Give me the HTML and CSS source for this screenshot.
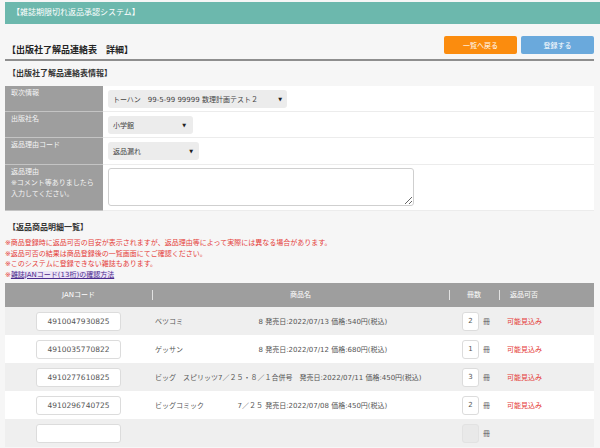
FILE: index.html
```html
<!DOCTYPE html>
<html lang="ja">
<head>
<meta charset="utf-8">
<title>出版社了解品連絡表 詳細</title>
<link rel="stylesheet" href="styles.css">
</head>
<body>
<div class="app-header">【雑誌期限切れ返品承認システム】</div>

<div class="title-row">
  <h1 class="page-title">【出版社了解品連絡表　詳細】</h1>
  <div class="actions">
    <button class="btn btn-back">一覧へ戻る</button>
    <button class="btn btn-save">登録する</button>
  </div>
</div>

<h2 class="section-title">【出版社了解品連絡表情報】</h2>
<div class="info">
  <div class="info-row r1">
    <div class="info-label">取次情報</div>
    <div class="info-value"><div class="sel sel-1"><span>トーハン　99-5-99 99999 数理計画テスト２</span><span class="arrow">▼</span></div></div>
  </div>
  <div class="info-row r2">
    <div class="info-label">出版社名</div>
    <div class="info-value"><div class="sel sel-2"><span>小学館</span><span class="arrow">▼</span></div></div>
  </div>
  <div class="info-row r3">
    <div class="info-label">返品理由コード</div>
    <div class="info-value"><div class="sel sel-3"><span>返品漏れ</span><span class="arrow">▼</span></div></div>
  </div>
  <div class="info-row r4">
    <div class="info-label">返品理由<br>※コメント等ありましたら<br>入力してください。</div>
    <div class="info-value top"><textarea class="memo"></textarea></div>
  </div>
</div>

<h2 class="section-title s2">【返品商品明細一覧】</h2>
<div class="notes">
  <p>※商品登録時に返品可否の目安が表示されますが、返品理由等によって実際には異なる場合があります。</p>
  <p>※返品可否の結果は商品登録後の一覧画面にてご確認ください。</p>
  <p>※このシステムに登録できない雑誌もあります。</p>
  <p>※<a class="jan-link" href="#">雑誌JANコード(13桁)の確認方法</a></p>
</div>

<div class="items">
  <div class="items-head">
    <div class="th c-jan">JANコード</div>
    <div class="th c-name">商品名</div>
    <div class="th c-qty">冊数</div>
    <div class="th c-ok">返品可否</div>
  </div>
  <div class="item odd">
    <div class="c-jan"><div class="jan">4910047930825</div></div>
    <div class="c-name"><span class="head"><span>ベツコミ</span><span>8</span></span> 発売日:2022/07/13 価格:540円(税込)</div>
    <div class="c-qty"><span class="qty">2</span><span>冊</span></div>
    <div class="c-ok ok">可能見込み</div>
  </div>
  <div class="item">
    <div class="c-jan"><div class="jan">4910035770822</div></div>
    <div class="c-name"><span class="head"><span>ゲッサン</span><span>8</span></span> 発売日:2022/07/12 価格:680円(税込)</div>
    <div class="c-qty"><span class="qty">1</span><span>冊</span></div>
    <div class="c-ok ok">可能見込み</div>
  </div>
  <div class="item odd">
    <div class="c-jan"><div class="jan">4910277610825</div></div>
    <div class="c-name">ビッグ　スピリッツ7／２５・８／１合併号　発売日:2022/07/11 価格:450円(税込)</div>
    <div class="c-qty"><span class="qty">3</span><span>冊</span></div>
    <div class="c-ok ok">可能見込み</div>
  </div>
  <div class="item">
    <div class="c-jan"><div class="jan">4910296740725</div></div>
    <div class="c-name"><span class="head"><span>ビッグコミック</span><span>7／２５</span></span> 発売日:2022/07/08 価格:450円(税込)</div>
    <div class="c-qty"><span class="qty">2</span><span>冊</span></div>
    <div class="c-ok ok">可能見込み</div>
  </div>
  <div class="item odd">
    <div class="c-jan"><div class="jan"></div></div>
    <div class="c-name"></div>
    <div class="c-qty"><span class="qty empty"></span><span>冊</span></div>
    <div class="c-ok ok"></div>
  </div>
</div>
</body>
</html>
```

FILE: styles.css
```css
* { box-sizing: border-box; }

body {
  margin: 0;
  background: #f6f6f6;
  font-family: "DejaVu Sans", "Noto Sans CJK JP", sans-serif;
  font-size: 7px;
  color: #555;
  overflow: hidden;
}

.app-header {
  margin: 2px 0 0 5px;
  height: 22px;
  line-height: 22px;
  padding-left: 7px;
  background: #6cb8ad;
  color: #fff;
  font-size: 8px;
}

.title-row {
  margin: 0 6px 0 5px;
  padding: 12px 0 5px 2px;
  display: flex;
  justify-content: space-between;
  border-bottom: 2px solid #8e8e8e;
}

.page-title {
  margin: 0 0 -2px;
  align-self: flex-end;
  font-size: 9px;
  line-height: 12px;
  font-weight: bold;
  color: #222;
}

.actions { display: flex; gap: 4px; }

.btn {
  width: 73px;
  height: 18px;
  border: none;
  border-radius: 2px;
  color: #fff;
  font-family: inherit;
  font-size: 7px;
  padding: 0;
}
.btn-back { background: #fb8c0e; }
.btn-save { background: #6aa9dc; }

.section-title {
  margin: 0 0 0 8px;
  padding: 8px 0 7px;
  font-size: 8px;
  line-height: 10px;
  font-weight: bold;
  color: #333;
}
.section-title.s2 { padding: 12px 0 5px; }

.info { margin: 0 6px 0 5px; }

.info-row {
  display: grid;
  grid-template-columns: 98px 1fr;
}
.info-row.r1, .info-row.r2 { height: 26px; }
.info-row.r3 { height: 27px; }
.info-row.r4 { height: 46px; }

.info-label {
  background: #9e9e9e;
  color: #f4f4f4;
  padding: 2px 0 0 6px;
  line-height: 11px;
  border-bottom: 1px solid #c4c4c4;
}

.info-value {
  background: #fff;
  border-bottom: 1px solid #ececec;
  padding-left: 5px;
  display: flex;
  align-items: center;
}
.info-value.top { align-items: flex-start; padding-top: 3px; }

.sel {
  height: 18px;
  background: #ececec;
  border-radius: 3px;
  display: flex;
  align-items: center;
  justify-content: space-between;
  padding: 0 5px 0 5px;
  color: #444;
}
.sel-1 { width: 179px; }
.sel-2 { width: 85px; padding-right: 7px; }
.sel-3 { width: 91px; padding-right: 6px; }
.arrow { font-size: 5px; color: #222; }

.memo {
  width: 306px;
  height: 38px;
  border: 1px solid #cfcfcf;
  border-radius: 3px;
  background: #fff;
  margin: 0;
}

.notes { margin: 0 0 3px 5px; }
.notes p {
  margin: 0;
  line-height: 10.5px;
  color: #e5403a;
}
.jan-link {
  color: #4b2a8c;
  background: #ece3f6;
  text-decoration: underline;
}

.items { margin: 0 6px 0 5px; }

.items-head, .item {
  display: grid;
  grid-template-columns: 147px 297px 50px 1fr;
}

.items-head {
  height: 24px;
  background: #9e9e9e;
  color: #fff;
  align-items: center;
}
.th { position: relative; line-height: 24px; }
.th + .th::before {
  content: "";
  position: absolute;
  left: 0;
  top: 7px;
  height: 10px;
  border-left: 1px solid #e2e2e2;
}
.items-head .c-jan, .items-head .c-name, .items-head .c-qty { text-align: center; }
.items-head .c-ok { padding-left: 11px; }

.item {
  height: 28px;
  background: #fff;
  align-items: center;
}
.item.odd { background: #efefef; }

.item .c-jan { display: flex; justify-content: center; }
.jan {
  width: 85px;
  height: 19px;
  background: #fff;
  border: 1px solid #dcdcdc;
  border-radius: 3px;
  text-align: center;
  line-height: 17px;
  font-size: 7.5px;
  color: #555;
}

.item .c-name { padding-left: 3px; white-space: nowrap; }
.head {
  display: inline-flex;
  align-items: baseline;
  justify-content: space-between;
  width: 108px;
}

.item .c-qty { display: flex; align-items: center; gap: 4px; padding-left: 13px; }
.qty {
  width: 17px;
  height: 19px;
  background: #fff;
  border: 1px solid #dcdcdc;
  border-radius: 3px;
  text-align: center;
  line-height: 17px;
}
.qty.empty { background: #e9e9e9; border-color: #e2e2e2; }

.item .c-ok { padding-left: 8px; }
.ok { color: #e5403a; }
```
